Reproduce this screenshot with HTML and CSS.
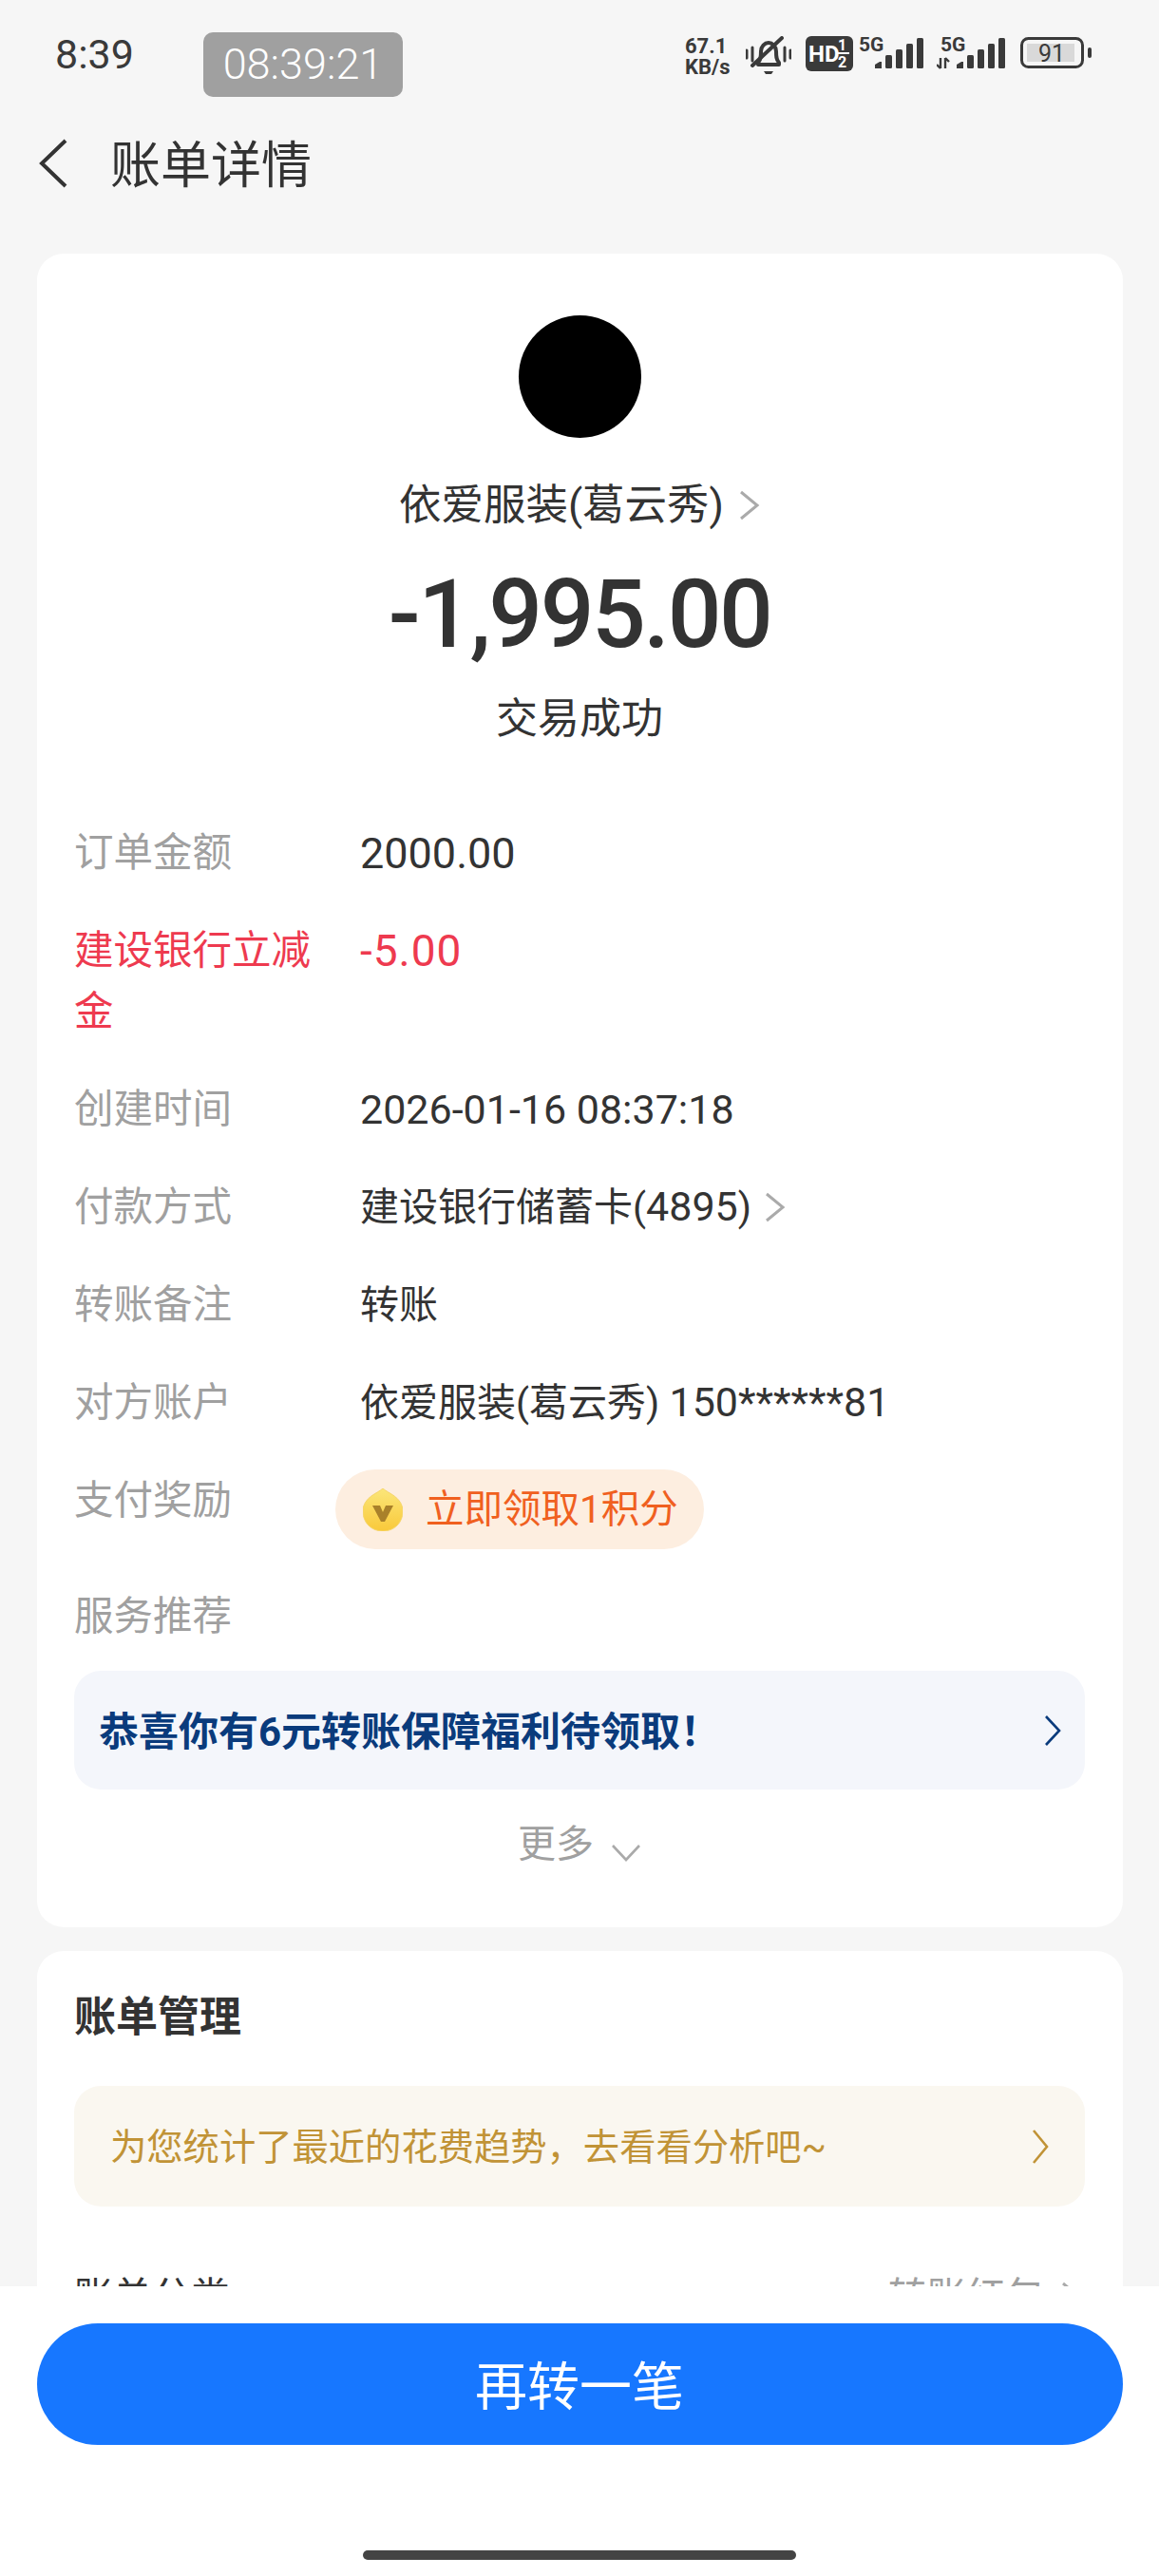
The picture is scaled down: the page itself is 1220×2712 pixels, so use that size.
FILE: index.html
```html
<!DOCTYPE html>
<html lang="zh-CN">
<head>
    <meta charset="UTF-8">
    <meta name="viewport" content="width=device-width, initial-scale=1.0">
    <title>账单详情</title>
    <link rel="stylesheet" href="styles.css">
</head>
<body>
    <div class="page">
        <!-- Status bar -->
        <div class="status-bar">
            <span class="clock">8:39</span>
            <span class="time-pill">08:39:21</span>
            <div class="status-icons">
                <div class="net-speed"><span>67.1</span><span>KB/s</span></div>
                <svg class="icon-bell" width="48" height="42" viewBox="0 0 48 42">
                    <path d="M13 28c3-3 3-7 3-12 0-5 4-9 8-9s8 4 8 9c0 5 0 9 3 12v2H13z" fill="none" stroke="#3a3a3a" stroke-width="4" stroke-linejoin="round"/>
                    <path d="M19 37h10l-2 3h-6z" fill="#3a3a3a"/>
                    <path d="M7 31 38 2" stroke="#3a3a3a" stroke-width="4" stroke-linecap="round"/>
                    <path d="M1 15v8M7 12v14M41 12v14M47 15v8" stroke="#3a3a3a" stroke-width="3" stroke-linecap="round"/>
                </svg>
                <svg class="icon-hd" width="50" height="37" viewBox="0 0 50 37">
                    <rect width="50" height="37" rx="6" fill="#3a3a3a"/>
                    <text x="3" y="27" class="hd-text">HD</text>
                    <text x="34" y="15" class="hd-sub">1</text>
                    <text x="34" y="33" class="hd-sub">2</text>
                    <path d="M33 18h13" stroke="#fff" stroke-width="2"/>
                </svg>
                <svg class="icon-signal" width="68" height="42" viewBox="0 -6 68 42">
                    <text x="0" y="16" class="net-type">5G</text>
                    <path d="M17 34v-4l5-3h2v7z" fill="#3a3a3a"/>
                    <rect x="28" y="20" width="7" height="14" rx="1.5" fill="#3a3a3a"/>
                    <rect x="39" y="14" width="7" height="20" rx="1.5" fill="#3a3a3a"/>
                    <rect x="50" y="8" width="7" height="26" rx="1.5" fill="#3a3a3a"/>
                    <rect x="61" y="2" width="7" height="32" rx="1.5" fill="#3a3a3a"/>
                </svg>
                <svg class="icon-signal" width="72" height="42" viewBox="0 -6 72 42">
                    <text x="4" y="16" class="net-type">5G</text>
                    <path d="M4 23v11M0 30l4 4M9 34V23M9 23l4 4" stroke="#3a3a3a" stroke-width="2.4" fill="none"/>
                    <path d="M21 34v-4l5-3h2v7z" fill="#3a3a3a"/>
                    <rect x="32" y="20" width="7" height="14" rx="1.5" fill="#3a3a3a"/>
                    <rect x="43" y="14" width="7" height="20" rx="1.5" fill="#3a3a3a"/>
                    <rect x="54" y="8" width="7" height="26" rx="1.5" fill="#3a3a3a"/>
                    <rect x="65" y="2" width="7" height="32" rx="1.5" fill="#3a3a3a"/>
                </svg>
                <svg class="icon-battery" width="75" height="33" viewBox="0 0 75 33">
                    <rect x="1.5" y="1.5" width="64" height="30" rx="7" fill="none" stroke="#3a3a3a" stroke-width="3"/>
                    <rect x="7" y="7" width="50" height="19" fill="#d9d9d9"/>
                    <rect x="71" y="11" width="4" height="11" rx="2" fill="#3a3a3a"/>
                    <text x="33" y="26" class="battery-text">91</text>
                </svg>
            </div>
        </div>

        <!-- Title bar -->
        <div class="nav-bar">
            <svg width="30" height="52" viewBox="0 0 30 52">
                <path d="M28 2 3 26l25 24" fill="none" stroke="#333" stroke-width="4"/>
            </svg>
            <h1>账单详情</h1>
        </div>

        <div class="content">
            <div class="card bill-card">
                <div class="bill-head">
                    <div class="avatar"></div>
                    <div class="payee">依爱服装(葛云秀)
                        <svg class="arrow" width="22" height="32" viewBox="0 0 22 32"><path d="M2 2l17 14L2 30" fill="none" stroke="#aaa" stroke-width="3"/></svg>
                    </div>
                    <div class="amount">-1,995.00</div>
                    <div class="bill-state">交易成功</div>
                </div>

                <div class="detail-list">
                    <div class="detail-row">
                        <div class="detail-label">订单金额</div>
                        <div class="detail-value"><span class="num wide">2000.00</span></div>
                    </div>
                    <div class="detail-row discount">
                        <div class="detail-label">建设银行立减金</div>
                        <div class="detail-value"><span class="num">-5.00</span></div>
                    </div>
                    <div class="detail-row">
                        <div class="detail-label">创建时间</div>
                        <div class="detail-value"><span class="num">2026-01-16 08:37:18</span></div>
                    </div>
                    <div class="detail-row">
                        <div class="detail-label">付款方式</div>
                        <div class="detail-value"><span>建设银行储蓄卡(<span class="num">4895</span>)</span>
                            <svg class="arrow" width="22" height="32" viewBox="0 0 22 32"><path d="M2 2l17 14L2 30" fill="none" stroke="#aaa" stroke-width="3"/></svg>
                        </div>
                    </div>
                    <div class="detail-row">
                        <div class="detail-label">转账备注</div>
                        <div class="detail-value">转账</div>
                    </div>
                    <div class="detail-row">
                        <div class="detail-label">对方账户</div>
                        <div class="detail-value"><span>依爱服装(葛云秀) <span class="num">150******81</span></span></div>
                    </div>
                    <div class="detail-row">
                        <div class="detail-label">支付奖励</div>
                        <div class="reward">
                            <svg width="42" height="45" viewBox="0 0 42 45">
                                <defs>
                                    <linearGradient id="coinFill" x1="0" y1="0" x2="0" y2="1">
                                        <stop offset="0" stop-color="#fbe67a"/>
                                        <stop offset="1" stop-color="#f9c93a"/>
                                    </linearGradient>
                                </defs>
                                <path d="M21 0C26 5 42 9 42 24c0 12-9 21-21 21S0 36 0 24C0 9 16 5 21 0z" fill="url(#coinFill)" stroke="#f6d56a"/>
                                <path d="M10 18h8l3 7 3-7h8L23 35h-4z" fill="#a9812a"/>
                            </svg>
                            <span>立即领取1积分</span>
                        </div>
                    </div>
                    <div class="detail-row">
                        <div class="detail-label">服务推荐</div>
                    </div>
                </div>

                <div class="notice notice-blue">
                    <span>恭喜你有6元转账保障福利待领取！</span>
                    <svg width="18" height="32" viewBox="0 0 18 32"><path d="M2 1l14 15L2 31" fill="none" stroke="#0a3b7c" stroke-width="2.6"/></svg>
                </div>

                <div class="more">更多
                    <svg width="32" height="19" viewBox="0 0 32 19"><path d="M2 2l14 15L30 2" fill="none" stroke="#aaa" stroke-width="2.6"/></svg>
                </div>
            </div>

            <div class="card manage-card">
                <h2>账单管理</h2>
                <div class="notice notice-gold">
                    <span>为您统计了最近的花费趋势，去看看分析吧~</span>
                    <svg width="18" height="36" viewBox="0 0 18 36"><path d="M2 1l14 17L2 35" fill="none" stroke="#c19336" stroke-width="2.6"/></svg>
                </div>
                <div class="manage-row">
                    <span>账单分类</span>
                    <span class="manage-value">转账红包
                        <svg class="arrow" width="22" height="32" viewBox="0 0 22 32"><path d="M2 2l17 14L2 30" fill="none" stroke="#aaa" stroke-width="3"/></svg>
                    </span>
                </div>
            </div>
        </div>

        <!-- Bottom action -->
        <div class="footer">
            <button class="again-btn" type="button">再转一笔</button>
            <div class="home-bar"></div>
        </div>
    </div>
</body>
</html>
```
FILE: styles.css
```css
/* Global Styles */

* {
    margin: 0;
    padding: 0;
    box-sizing: border-box;
}

body {
    font-family: Roboto, 'Noto Sans CJK SC', sans-serif;
    background-color: #f6f6f6;
    color: #333;
}

.page {
    display: flex;
    flex-direction: column;
    width: 1220px;
    height: 2712px;
    overflow: hidden;
}

/* Status Bar */

.status-bar {
    display: flex;
    align-items: flex-start;
    height: 110px;
    padding: 24px 71px 0 58px;
    flex-shrink: 0;
}

.clock {
    width: 156px;
    font-size: 43px;
    line-height: 66px;
    color: #3a3a3a;
}

.time-pill {
    width: 210px;
    height: 68px;
    margin-top: 10px;
    background-color: #a0a0a0;
    border-radius: 10px;
    color: #fff;
    font-size: 45px;
    font-weight: 300;
    line-height: 68px;
    text-align: center;
}

.status-icons {
    display: flex;
    align-items: flex-start;
    margin-left: auto;
    margin-top: 14px;
}

.net-speed {
    display: flex;
    flex-direction: column;
    width: 52px;
    font-size: 22px;
    font-weight: 700;
    line-height: 22px;
    color: #3a3a3a;
}

.icon-bell {
    margin-left: 12px;
}

.icon-hd {
    margin-left: 15px;
}

.icon-signal {
    margin: -6px 0 0 6px;
}

.icon-signal + .icon-signal {
    margin-left: 14px;
}

.icon-battery {
    margin-left: 16px;
    margin-top: 1px;
}

.hd-text {
    font-size: 24px;
    font-weight: 700;
    fill: #fff;
}

.hd-sub {
    font-size: 16px;
    font-weight: 700;
    fill: #fff;
}

.net-type {
    font-size: 21px;
    font-weight: 700;
    fill: #3a3a3a;
}

.battery-text {
    font-size: 25px;
    fill: #3a3a3a;
    text-anchor: middle;
}

/* Title Bar */

.nav-bar {
    display: flex;
    align-items: center;
    gap: 45px;
    height: 124px;
    padding-left: 41px;
    flex-shrink: 0;
}

.nav-bar h1 {
    padding-bottom: 4px;
    font-size: 53px;
    font-weight: 400;
    color: #333;
}

/* Cards */

.content {
    flex: 1;
    display: flex;
    flex-direction: column;
    gap: 25px;
    min-height: 0;
    padding: 33px 38px 0 39px;
    overflow: hidden;
}

.card {
    flex-shrink: 0;
    background-color: #fff;
    border-radius: 28px;
    padding: 0 40px 0 39px;
}

.bill-card {
    padding-bottom: 55px;
}

.bill-head {
    display: flex;
    flex-direction: column;
    align-items: center;
    padding-top: 65px;
}

.avatar {
    width: 129px;
    height: 129px;
    background-color: #000;
    border-radius: 50%;
}

.payee {
    display: flex;
    align-items: center;
    gap: 16px;
    margin-top: 39px;
    font-size: 44.5px;
    line-height: 64px;
}

.amount {
    margin-top: 33px;
    font-size: 100px;
    font-weight: 500;
    line-height: 100px;
    letter-spacing: -2.5px;
}

.bill-state {
    margin-top: 30px;
    font-size: 44px;
    line-height: 60px;
}

/* Detail Rows */

.detail-list {
    display: flex;
    flex-direction: column;
    gap: 39px;
    margin-top: 79px;
}

.detail-row {
    display: grid;
    grid-template-columns: 260px 1fr;
    column-gap: 41px;
    align-items: start;
    font-size: 41.5px;
    line-height: 64px;
}

.detail-label {
    color: #a0a0a0;
}

.detail-value {
    display: flex;
    align-items: center;
    gap: 14px;
    min-height: 64px;
    color: #333;
    font-size: 41px;
}

/* digits run a little larger than the Chinese text beside them */
.num {
    font-size: 43px;
    line-height: 1;
}

.num.wide {
    font-size: 45px;
}

.discount .num {
    font-size: 46px;
    letter-spacing: 1px;
}

.discount .detail-label,
.discount .detail-value {
    color: #ee3a4f;
}

.reward {
    display: flex;
    align-items: center;
    gap: 24px;
    justify-self: start;
    height: 84px;
    margin: -1px 0 0 -26px;
    padding: 0 27px 0 29px;
    background-color: #fdeee0;
    border-radius: 42px;
    color: #f0601f;
    font-size: 40.5px;
}

/* Notice Bars */

.notice {
    display: flex;
    align-items: center;
    justify-content: space-between;
    border-radius: 28px;
}

.notice span {
    padding-bottom: 4px;
}

.notice-blue {
    height: 125px;
    margin-top: 25px;
    padding: 0 25px 0 26px;
    background-color: #f4f6fb;
    color: #0a3b7c;
    font-size: 42px;
    font-weight: 700;
}

.notice-gold {
    height: 127px;
    margin-top: 42px;
    padding: 0 38px 0 38px;
    background-color: #faf7f0;
    color: #c19336;
    font-size: 38.3px;
}

.more {
    display: flex;
    align-items: center;
    justify-content: center;
    gap: 18px;
    margin-top: 26px;
    color: #a0a0a0;
    font-size: 40px;
    line-height: 64px;
}

.more svg {
    margin-top: 16px;
}

/* Bill Management */

.manage-card {
    padding-bottom: 60px;
}

.manage-card h2 {
    padding-top: 40px;
    font-size: 44px;
    font-weight: 700;
    line-height: 60px;
}

.manage-row {
    display: flex;
    justify-content: space-between;
    margin-top: 63px;
    font-size: 41px;
    line-height: 64px;
}

.manage-value {
    display: flex;
    align-items: center;
    gap: 18px;
    margin-right: 3px;
    color: #a0a0a0;
}

/* Bottom Action */

.footer {
    display: flex;
    flex-direction: column;
    align-items: center;
    height: 305px;
    padding-top: 39px;
    background-color: #fff;
    flex-shrink: 0;
}

.again-btn {
    width: 1143px;
    height: 128px;
    padding-bottom: 5px;
    background-color: #1777ff;
    border: none;
    border-radius: 64px;
    color: #fff;
    font-family: inherit;
    font-size: 55px;
}

.home-bar {
    width: 456px;
    height: 10px;
    margin-top: 111px;
    background-color: #444;
    border-radius: 5px;
}
```
